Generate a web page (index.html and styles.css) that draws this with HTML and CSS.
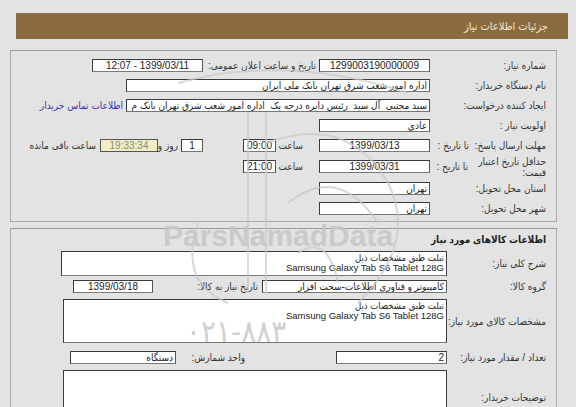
FILE: index.html
```html
<!DOCTYPE html>
<html lang="fa">
<head>
<meta charset="utf-8">
<link rel="stylesheet" href="styles.css">
</head>
<body>
<div class="page" dir="rtl">
  <div class="header">جزئیات اطلاعات نیاز</div>

  <div class="panel p1">
    <div class="row">
      <div class="lbl">شماره نیاز:</div>
      <div class="fld w111 c">1299003190000009</div>
      <div class="lbl2 w115">تاریخ و ساعت اعلان عمومی:</div>
      <div class="fld w111 c">1399/03/11 - 12:07</div>
    </div>
    <div class="row">
      <div class="lbl">نام دستگاه خریدار:</div>
      <div class="fld w304">اداره امور شعب شرق تهران بانک ملی ایران</div>
    </div>
    <div class="row">
      <div class="lbl">ایجاد کننده درخواست:</div>
      <div class="fld w304">سید مجتبی  آل سید  رئیس دایره درجه یک  اداره امور شعب شرق تهران بانک م</div>
      <a class="link">اطلاعات تماس خریدار</a>
    </div>
    <div class="row">
      <div class="lbl">اولویت نیاز :</div>
      <div class="fld w111">عادي</div>
    </div>
    <div class="row">
      <div class="lbl">مهلت ارسال پاسخ:  تا تاریخ :</div>
      <div class="fld w111 c">1399/03/13</div>
      <div class="saat">ساعت</div>
      <div class="fld w33 c">09:00</div>
      <div class="sp40"></div>
      <div class="fld w22 c">1</div>
      <div class="rooz">روز و</div>
      <div class="fld w58 c timer">19:33:34</div>
      <div class="rem">ساعت باقی مانده</div>
    </div>
    <div class="row tall">
      <div class="lbl-a">حداقل تاریخ اعتبار<br>قیمت:</div>
      <div class="lbl-b">تا تاریخ :</div>
      <div class="fld w111 c">1399/03/31</div>
      <div class="saat">ساعت</div>
      <div class="fld w33 c">21:00</div>
    </div>
    <div class="row">
      <div class="lbl">استان محل تحویل:</div>
      <div class="fld w111">تهران</div>
    </div>
    <div class="row">
      <div class="lbl">شهر محل تحویل:</div>
      <div class="fld w111">تهران</div>
    </div>
  </div>

  <div class="panel p2">
    <div class="title">اطلاعات کالاهای مورد نیاز</div>
    <div class="row area-row">
      <div class="lbl lbl2col">شرح کلی نیاز:</div>
      <div class="area h25">تبلت طبق مشخصات ذیل<br>Samsung Galaxy Tab S6 Tablet 128G</div>
    </div>
    <div class="row">
      <div class="lbl lbl2col">گروه کالا:</div>
      <div class="fld w185">کامپیوتر و فناوری اطلاعات-سخت افزار</div>
      <div class="need">تاریخ نیاز به کالا:</div>
      <div class="fld w80 c">1399/03/18</div>
    </div>
    <div class="row area-row m3">
      <div class="lbl lbl2col">مشخصات کالای مورد نیاز:</div>
      <div class="area h44">تبلت طبق مشخصات ذیل<br>Samsung Galaxy Tab S6 Tablet 128G</div>
    </div>
    <div class="row m4">
      <div class="lbl lbl2col">تعداد / مقدار مورد نیاز:</div>
      <div class="fld w111">2</div>
      <div class="unit">واحد شمارش:</div>
      <div class="fld w106">دستگاه</div>
    </div>
    <div class="row area-row m3">
      <div class="lbl lbl2col">توضیحات خریدار:</div>
      <div class="area h54"></div>
    </div>
  </div>

  <div class="wm-logo">
    <svg width="300" height="260" viewBox="0 0 300 260">
      <g fill="none" stroke="#c9c9c9" stroke-width="2">
        <path d="M40 30 Q150 0 270 40"/>
        <path d="M110 60 L110 240"/>
        <path d="M128 60 L128 240"/>
        <path d="M128 90 Q210 60 250 130 Q280 190 220 250"/>
        <path d="M150 150 Q200 110 240 170"/>
        <path d="M60 170 Q40 230 90 250"/>
        <path d="M160 200 Q190 180 200 230"/>
      </g>
    </svg>
  </div>
  <div class="wm-text">ParsNamadData</div>
  <div class="wm-phone">۰۲۱-۸۸۳</div>
</div>
</body>
</html>
```

FILE: styles.css
```css
html, body {
  margin: 0;
  padding: 0;
  background: #e3e3e3;
  overflow: hidden;
}
body {
  padding: 13px 8px 0 8px;
  font-family: "Liberation Sans", "DejaVu Sans Condensed", "DejaVu Sans", sans-serif;
  font-size: 10px;
  color: #222;
}
.page {
  position: relative;
  width: 560px;
}
.header {
  height: 26px;
  width: 552px;
  margin-left: 8px;
  background: #8b6b40;
  color: #f1e8d6;
  font-size: 11px;
  line-height: 26px;
  padding-right: 20px;
  box-sizing: border-box;
}
.panel {
  width: 547px;
  margin-right: 11px;
  border: 1px solid #a9a9a9;
  border-top-color: #9a9a9a;
  box-sizing: border-box;
  padding-right: 10px;
}
.p1 {
  margin-top: 11px;
  height: 172px;
  padding-top: 4px;
}
.p2 {
  margin-top: 6px;
  height: 200px;
  padding-top: 1px;
}
.row {
  display: flex;
  align-items: center;
  height: 20px;
  white-space: nowrap;
}
.row.tall { height: 23px; }
.lbl {
  width: 116px;
  flex: none;
  white-space: pre;
  color: #333;
}
.lbl2col { width: 99px; }
.lbl-a {
  width: 78px;
  flex: none;
  line-height: 11px;
  color: #333;
}
.lbl-b {
  width: 38px;
  flex: none;
  color: #333;
}
.fld {
  flex: none;
  height: 13px;
  box-sizing: border-box;
  background: #fff;
  border: 1px solid #3a3a3a;
  border-right-color: #555;
  border-bottom-color: #777;
  line-height: 11px;
  padding: 0 2px;
  overflow: hidden;
  white-space: pre;
  color: #222;
}
.c { text-align: center; }
.w22 { width: 22px; }
.w33 { width: 33px; }
.w58 { width: 58px; }
.w80 { width: 80px; }
.w106 { width: 106px; }
.w111 { width: 111px; }
.w185 { width: 185px; }
.w304 { width: 304px; }
.lbl2 {
  flex: none;
  box-sizing: border-box;
  padding-right: 3px;
  color: #333;
}
.w115 { width: 116px; }
.link {
  color: #3535b5;
  margin-right: 3px;
}
.saat {
  width: 43px;
  flex: none;
  box-sizing: border-box;
  padding-right: 16px;
  color: #333;
}
.sp40 { width: 40px; flex: none; }
.rooz {
  width: 23px;
  flex: none;
  box-sizing: border-box;
  padding-right: 3px;
  color: #333;
}
.timer {
  background: #f1eec6;
  color: #8a8a80;
  border-color: #555;
}
.rem {
  flex: none;
  padding-right: 4px;
  color: #333;
  letter-spacing: 0.3px;
}
.title {
  height: 21px;
  line-height: 19px;
  font-weight: bold;
  color: #222;
  font-size: 10px;
}
.area-row {
  height: auto;
  align-items: center;
}
.area {
  flex: none;
  width: 386px;
  box-sizing: border-box;
  background: #fff;
  border: 1px solid #3a3a3a;
  border-bottom-color: #777;
  padding: 1px 2px;
  line-height: 10px;
  font-size: 9.5px;
  color: #222;
}
.h25 { height: 25px; }
.h44 { height: 44px; width: 384px; }
.h54 { height: 54px; width: 384px; }
.m3 { margin-top: 3px; }
.m4 { margin-top: 4px; }
.need {
  width: 109px;
  flex: none;
  box-sizing: border-box;
  padding-right: 4px;
  color: #333;
}
.unit {
  width: 160px;
  flex: none;
  box-sizing: border-box;
  padding-right: 91px;
  color: #333;
}
.wm-logo {
  position: absolute;
  left: 130px;
  top: 40px;
  pointer-events: none;
  opacity: 0.7;
}
.wm-text {
  position: absolute;
  left: 155px;
  top: 208px;
  font-family: "Liberation Sans", sans-serif;
  font-weight: bold;
  font-size: 30px;
  line-height: 1;
  color: #c6c6c6;
  opacity: 0.85;
  pointer-events: none;
  direction: ltr;
}
.wm-phone {
  position: absolute;
  left: 178px;
  top: 303px;
  font-size: 31px;
  line-height: 1;
  color: #c8c8c8;
  opacity: 0.85;
  direction: ltr;
  pointer-events: none;
}
```
